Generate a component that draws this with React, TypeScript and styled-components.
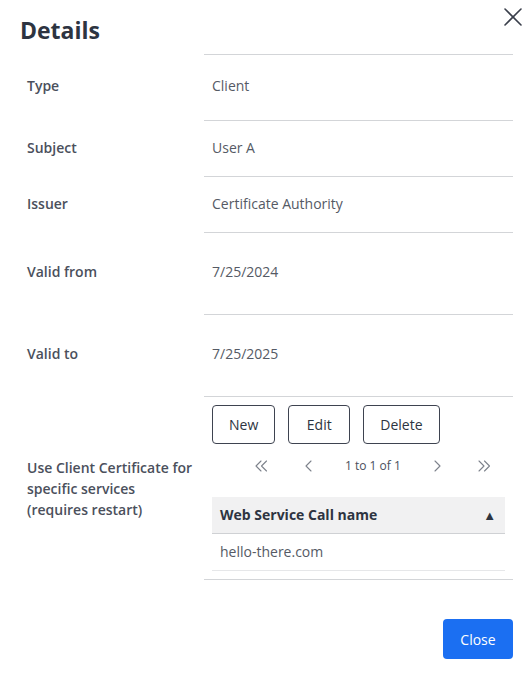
import React from 'react';
import styled, { createGlobalStyle } from 'styled-components';

const Global = createGlobalStyle`
  html, body { margin: 0; padding: 0; background: #ffffff; }
  body { font-family: "Open Sans", "Noto Sans", sans-serif; -webkit-font-smoothing: antialiased; }
  * { box-sizing: border-box; }
`;

const Dialog = styled.div`
  width: 528px;
  height: 676px;
  display: flex;
  flex-direction: column;
  background: #fff;
`;

const Header = styled.div`
  display: flex;
  justify-content: space-between;
  align-items: flex-start;
  padding: 8px 6px 0 20px;
`;

const Title = styled.h2`
  margin: 7px 0 0;
  font-size: 23px;
  line-height: 31px;
  font-weight: 700;
  color: #2d3441;
`;

const CloseIcon = styled.button`
  width: 18px;
  height: 18px;
  padding: 0;
  border: none;
  background: transparent;
  display: flex;
  cursor: pointer;
`;

const Fields = styled.div`
  margin-top: 8px;
  padding: 0 15px 0 27px;
  display: flex;
  flex-direction: column;
`;

const Label = styled.div<{ $pt: number; $pb: number }>`
  padding: ${p => p.$pt + 1}px 0 ${p => p.$pb}px;
  font-size: 14px;
  line-height: 20px;
  font-weight: 600;
  color: #4b505c;
`;

const Value = styled.div<{ $pt: number; $pb: number }>`
  border-top: 1px solid #d3d5d8;
  padding: ${p => p.$pt}px 8px ${p => p.$pb}px;
  font-size: 14px;
  line-height: 20px;
  color: #555a65;
`;

const Row = styled.div`
  display: grid;
  grid-template-columns: 177px 309px;
  align-items: stretch;
  &:last-child > ${Value} {
    border-bottom: 1px solid #d3d5d8;
  }
`;

const CenteredLabel = styled.div`
  align-self: center;
  font-size: 14px;
  line-height: 21px;
  font-weight: 600;
  color: #4b505c;
  padding-right: 6px;
`;

const Toolbar = styled.div`
  display: flex;
  gap: 13px;
`;

const OutlineButton = styled.button<{ $min?: number }>`
  height: 39px;
  min-width: ${p => p.$min ?? 0}px;
  padding: 0 16px;
  border: 1px solid #3e4350;
  border-radius: 4px;
  background: #fff;
  font-family: inherit;
  font-size: 14px;
  color: #2d3441;
  cursor: pointer;
`;

const Pager = styled.div`
  display: flex;
  align-items: center;
  height: 30px;
  margin: 7px 0 16px;
  padding-left: 39px;
  gap: 27px;
  color: #4b505c;
`;

const PagerIcon = styled.span`
  width: 20px;
  display: flex;
  justify-content: center;
  color: #7d828c;
`;

const PagerText = styled.span`
  width: 55px;
  text-align: center;
  white-space: nowrap;
  font-size: 12px;
  color: #4b505c;
`;

const Table = styled.div`
  display: flex;
  flex-direction: column;
`;

const HeadRow = styled.div`
  display: flex;
  align-items: center;
  justify-content: space-between;
  height: 37px;
  padding: 0 9px 0 8px;
  background: #f1f1f2;
  border-bottom: 1px solid #cfd1d4;
  font-size: 14px;
  font-weight: 700;
  color: #2d3441;
`;

const SortMark = styled.span`
  font-size: 13px;
  line-height: 1;
  color: #2d3441;
`;

const BodyRow = styled.div`
  display: flex;
  align-items: center;
  height: 37px;
  padding: 0 8px;
  border-bottom: 1px solid #e6e7e9;
  font-size: 14px;
  color: #555a65;
`;

const Footer = styled.div`
  display: flex;
  justify-content: flex-end;
  padding: 39px 15px 0;
`;

const PrimaryButton = styled.button`
  width: 70px;
  height: 40px;
  border: none;
  border-radius: 4px;
  background: #1b6ff2;
  color: #fff;
  font-family: inherit;
  font-size: 14px;
  cursor: pointer;
`;

const Chevron = ({ dir, double }: { dir: 'left' | 'right'; double?: boolean }) => {
  const pts = (x: number) =>
    dir === 'left' ? `${x + 5},1 ${x},6 ${x + 5},11` : `${x},1 ${x + 5},6 ${x},11`;
  return (
    <svg width={double ? 13 : 7} height="12" viewBox={`0 0 ${double ? 13 : 7} 12`} fill="none"
      stroke="currentColor" strokeWidth="1.1" strokeLinecap="round" strokeLinejoin="round">
      <polyline points={pts(1)} />
      {double && <polyline points={pts(6.5)} />}
    </svg>
  );
};

const fields: { label: string; value: string; pt: number; pb: number }[] = [
  { label: 'Type', value: 'Client', pt: 21, pb: 24 },
  { label: 'Subject', value: 'User A', pt: 17, pb: 18 },
  { label: 'Issuer', value: 'Certificate Authority', pt: 17, pb: 18 },
  { label: 'Valid from', value: '7/25/2024', pt: 29, pb: 32 },
  { label: 'Valid to', value: '7/25/2025', pt: 29, pb: 32 },
];

export default function App() {
  return (
    <>
      <Global />
      <Dialog>
        <Header>
          <Title>Details</Title>
          <CloseIcon aria-label="Close">
            <svg width="18" height="18" viewBox="0 0 18 18" fill="none" stroke="#3a3f4b" strokeWidth="1.6" strokeLinecap="round">
              <line x1="1" y1="1" x2="17" y2="17" />
              <line x1="17" y1="1" x2="1" y2="17" />
            </svg>
          </CloseIcon>
        </Header>
        <Fields>
          {fields.map(f => (
            <Row key={f.label}>
              <Label $pt={f.pt} $pb={f.pb}>{f.label}</Label>
              <Value $pt={f.pt} $pb={f.pb}>{f.value}</Value>
            </Row>
          ))}
          <Row>
            <CenteredLabel>Use Client Certificate for specific services (requires restart)</CenteredLabel>
            <Value $pt={8} $pb={8}>
              <Toolbar>
                <OutlineButton>New</OutlineButton>
                <OutlineButton $min={62}>Edit</OutlineButton>
                <OutlineButton>Delete</OutlineButton>
              </Toolbar>
              <Pager>
                <PagerIcon><Chevron dir="left" double /></PagerIcon>
                <PagerIcon><Chevron dir="left" /></PagerIcon>
                <PagerText>1 to 1 of 1</PagerText>
                <PagerIcon><Chevron dir="right" /></PagerIcon>
                <PagerIcon><Chevron dir="right" double /></PagerIcon>
              </Pager>
              <Table>
                <HeadRow>
                  <span>Web Service Call name</span>
                  <SortMark>▲</SortMark>
                </HeadRow>
                <BodyRow>hello-there.com</BodyRow>
              </Table>
            </Value>
          </Row>
        </Fields>
        <Footer>
          <PrimaryButton>Close</PrimaryButton>
        </Footer>
      </Dialog>
    </>
  );
}
